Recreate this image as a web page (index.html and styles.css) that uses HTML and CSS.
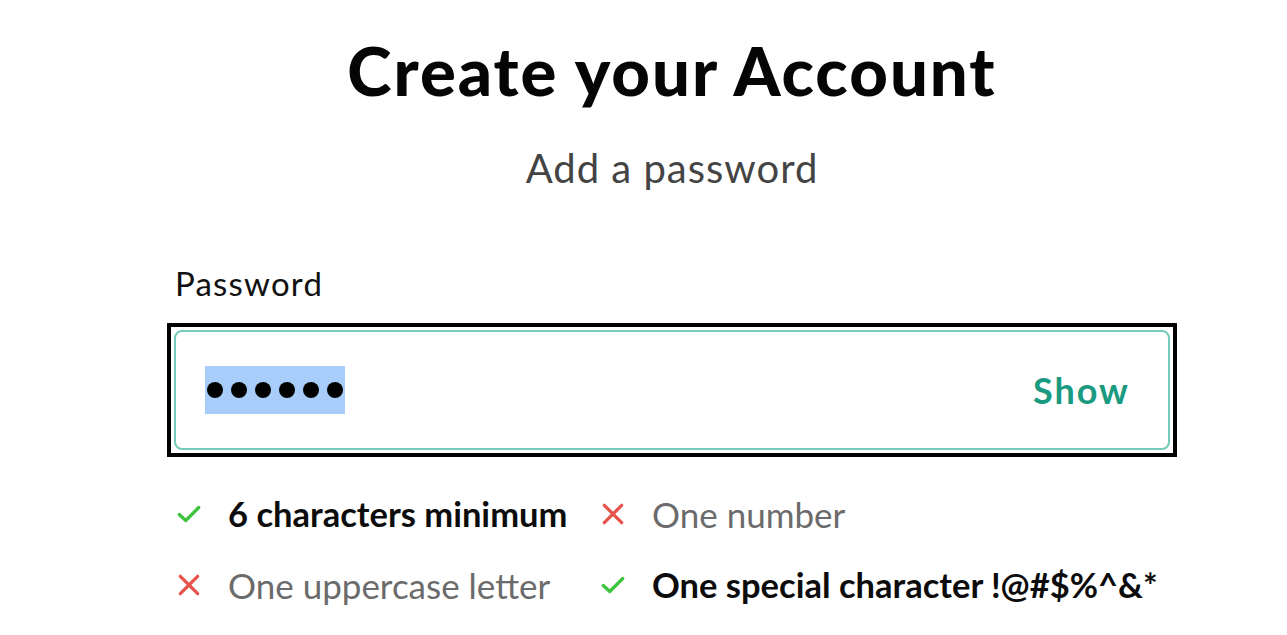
FILE: index.html
```html
<!DOCTYPE html>
<html lang="en">
<head>
<meta charset="utf-8">
<title>Create your Account</title>
<link rel="stylesheet" href="styles.css">
</head>
<body>
<main class="page">
  <h1 class="title">Create your Account</h1>
  <p class="subtitle">Add a password</p>
  <div class="field">
    <label class="label" for="pw">Password</label>
    <div class="focus-ring">
      <div class="input-box">
        <span class="dots"><span class="dot"></span><span class="dot"></span><span class="dot"></span><span class="dot"></span><span class="dot"></span><span class="dot"></span></span>
        <span class="show">Show</span>
      </div>
    </div>
  </div>
  <ul class="rules">
    <li class="rule ok"><svg class="icon" viewBox="0 0 24 24"><path d="M3 12.5l6 5.5L21 6" fill="none" stroke="#3cc43c" stroke-width="3" stroke-linecap="round" stroke-linejoin="round"/></svg><span>6 characters minimum</span></li>
    <li class="rule bad"><svg class="icon" viewBox="0 0 24 24"><path d="M4 4l16 16M20 4L4 20" fill="none" stroke="#e5534b" stroke-width="3" stroke-linecap="round"/></svg><span>One number</span></li>
    <li class="rule bad"><svg class="icon" viewBox="0 0 24 24"><path d="M4 4l16 16M20 4L4 20" fill="none" stroke="#e5534b" stroke-width="3" stroke-linecap="round"/></svg><span>One uppercase letter</span></li>
    <li class="rule ok"><svg class="icon" viewBox="0 0 24 24"><path d="M3 12.5l6 5.5L21 6" fill="none" stroke="#3cc43c" stroke-width="3" stroke-linecap="round" stroke-linejoin="round"/></svg><span>One special character !@#$%^&amp;*</span></li>
  </ul>
</main>
</body>
</html>
```
FILE: styles.css
```css
html, body { margin: 0; padding: 0; background: #ffffff; }
body { font-family: "Lato", "Noto Sans", sans-serif; color: #111; }
.page { width: 1010px; margin: 0 0 0 167px; padding-top: 30px; }
.title { margin: 0; text-align: center; font-size: 67px; font-weight: 900; line-height: 80px; color: #050505; letter-spacing: 2px; }
.subtitle { margin: 34px 0 0; text-align: center; font-size: 40px; line-height: 48px; color: #444; letter-spacing: 1px; }
.field { margin-top: 71px; }
.label { display: block; margin-left: 8px; font-size: 33px; line-height: 40px; color: #111; letter-spacing: 1.2px; }
.focus-ring { margin-top: 20px; border: 4px solid #000; padding: 3px; }
.input-box { height: 116px; border: 2px solid #74cbb9; border-radius: 8px; display: flex; align-items: center; justify-content: space-between; padding: 0 38px 0 29px; }
.dots { display: flex; gap: 8px; background: #a9cdfb; padding: 16px 2px; }
.dot { width: 16px; height: 16px; border-radius: 50%; background: #000; }
.show { color: #1a9a80; font-weight: 700; font-size: 36px; letter-spacing: 2px; }
.rules { list-style: none; margin: 35px 0 0; padding: 0 0 0 9px; display: grid; grid-template-columns: 424px auto; row-gap: 27px; }
.rule { display: flex; align-items: center; font-size: 35px; line-height: 44px; }
.icon { width: 26px; height: 26px; margin-right: 26px; flex: none; }
.rule.ok span { color: #0c0c0c; font-weight: 700; font-size: 34.5px; }
.rule.bad span { color: #6b6b6b; }
```
